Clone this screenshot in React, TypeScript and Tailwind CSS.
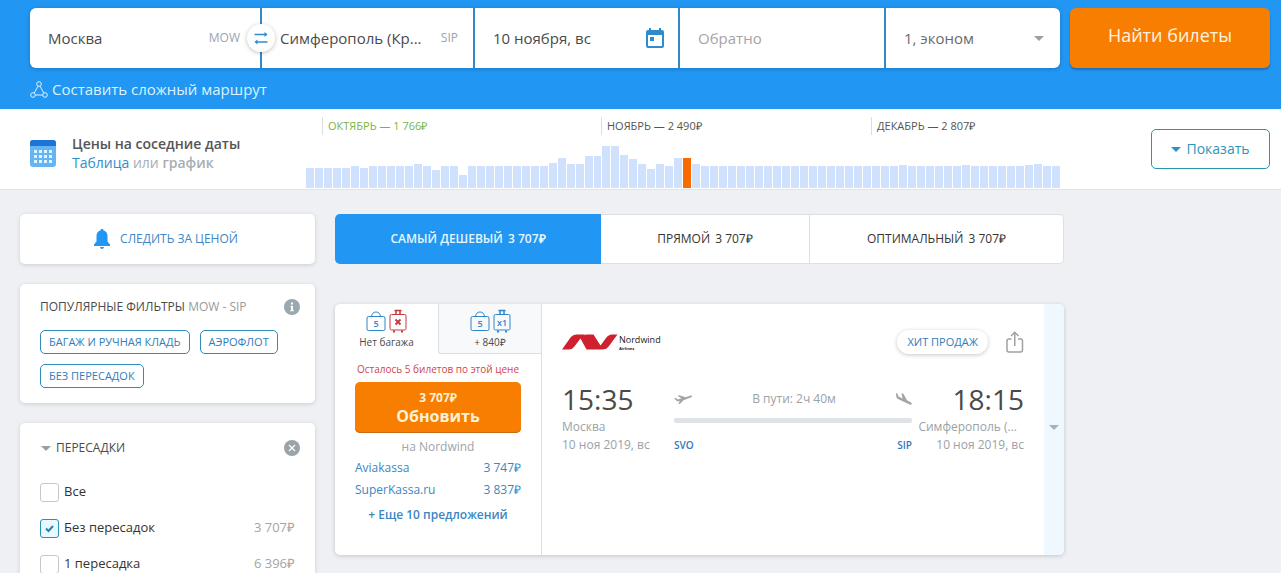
import React from 'react';
import clsx from 'clsx';

const PRICE_BARS = [
  20, 20, 20, 20, 20, 22, 20, 22, 22, 22, 22, 22, 24, 22, 18, 22, 22, 13, 22, 22, 22,
  22, 22, 22, 22, 22, 22, 25, 30, 24, 24, 32, 32, 42, 42, 33, 29, 24, 19, 24, 22, 30,
  30, 24, 22, 22, 22, 22, 22, 22, 22, 22, 22, 22, 22, 22, 22, 22, 22, 22, 22, 22, 22,
  22, 22, 22, 23, 22, 22, 22, 22, 22, 22, 23, 22, 22, 22, 22, 22, 22, 23, 24, 22, 22,
];
const SELECTED_BAR = 42;

const MONTHS = [
  { label: 'ОКТЯБРЬ — 1 766₽', cheapest: true },
  { label: 'НОЯБРЬ — 2 490₽', cheapest: false },
  { label: 'ДЕКАБРЬ — 2 807₽', cheapest: false },
];

const STOPS = [
  { id: 'all', label: 'Все', price: '', checked: false },
  { id: 'direct', label: 'Без пересадок', price: '3 707₽', checked: true },
  { id: 'one', label: '1 пересадка', price: '6 396₽', checked: false },
];

const QUICK_FILTERS = ['БАГАЖ И РУЧНАЯ КЛАДЬ', 'АЭРОФЛОТ', 'БЕЗ ПЕРЕСАДОК'];

const OFFERS = [
  { agency: 'Aviakassa', price: '3 747₽' },
  { agency: 'SuperKassa.ru', price: '3 837₽' },
];

const Caret: React.FC<{ className?: string }> = ({ className }) => (
  <svg viewBox="0 0 10 5" className={clsx('h-[5px] w-[10px] shrink-0 fill-current', className)} aria-hidden="true">
    <path d="M0 0h10L5 5z" />
  </svg>
);

const CabinBag = () => (
  <svg viewBox="0 0 20 22" className="h-[22px] w-5" fill="none" stroke="#2f86c9" aria-hidden="true">
    <rect x="1" y="5.5" width="18" height="14" rx="1.5" />
    <path d="M5.5 5.5C6 2.500 7.500 1 10 1s4 1.500 4.500 4.500" />
    <text x="10" y="16" textAnchor="middle" fontSize="9" fontWeight="600" fill="#2f86c9" stroke="none">5</text>
  </svg>
);

const Suitcase: React.FC<{ none?: boolean }> = ({ none }) => {
  const color = none ? '#c9343d' : '#2f86c9';
  return (
    <svg viewBox="0 0 18 24" className="h-6 w-[18px]" fill="none" stroke={color} aria-hidden="true">
      <rect x="1" y="5.500" width="16" height="15.500" rx="1.500" />
      <path d="M5.500 1.500h7M7 1.500v4M11 1.500v4" strokeWidth="1.500" />
      <path d="M4 22.500h2M12 22.500h2" strokeWidth="2" />
      {none ? (
        <path d="M6.500 10.500l5 5M11.500 10.500l-5 5" strokeWidth="1.800" />
      ) : (
        <text x="9" y="16.500" textAnchor="middle" fontSize="9" fontWeight="600" fill={color} stroke="none">x1</text>
      )}
    </svg>
  );
};

const SearchHeader = () => (
  <header className="bg-[#2196f3] pt-2 pr-[11px] pb-[9px] pl-[30px]">
    <form className="flex gap-[10px]" onSubmit={(e) => e.preventDefault()}>
      <div className="grid h-[60px] flex-1 grid-cols-[230fr_211fr_203fr_204fr_174fr] gap-0.5 rounded-md bg-[#3588c8] text-[15px] text-[#4a4a4a] shadow-[0_1px_4px_rgba(0,0,0,0.2)]">
        <label className="relative flex min-w-0 items-center rounded-l-md bg-white pr-5 pl-[18px]">
          <input aria-label="Откуда" defaultValue="Москва" className="w-0 flex-1 outline-none" />
          <span className="text-xs text-[#9aa5ab]">MOW</span>
          <button
            type="button"
            aria-label="Поменять местами"
            className="absolute top-4 -right-[15px] z-10 flex size-7 items-center justify-center rounded-full bg-white shadow-[0_1px_4px_rgba(0,0,0,0.25)]"
          >
            <svg viewBox="0 0 14 14" className="size-[14px]" fill="none" stroke="#2f8ccc" strokeWidth="1.5" aria-hidden="true">
              <path d="M0.500 3.500h12M1.500 11h12" />
              <path d="M10.500 1l3 2.500-3 2.500zM3.500 8.500l-3 2.500 3 2.500z" fill="#2f8ccc" stroke="none" />
            </svg>
          </button>
        </label>
        <label className="flex min-w-0 items-center bg-white pr-[15px] pl-[18px]">
          <input aria-label="Куда" defaultValue="Симферополь (Кр..." className="w-0 flex-1 outline-none" />
          <span className="text-xs text-[#9aa5ab]">SIP</span>
        </label>
        <label className="flex min-w-0 items-center bg-white pr-[14px] pl-[18px]">
          <input aria-label="Туда" defaultValue="10 ноября, вс" className="w-0 flex-1 outline-none" />
          <svg viewBox="0 0 18 20" className="h-5 w-[18px]" fill="#2f8ccc" aria-hidden="true">
            <path fillRule="evenodd" d="M3 0h2v2h8V0h2v2h1a2 2 0 0 1 2 2v14a2 2 0 0 1-2 2H2a2 2 0 0 1-2-2V4a2 2 0 0 1 2-2h1zM2 7v11h14V7z" />
            <path d="M4 9h4v4H4z" />
          </svg>
        </label>
        <label className="flex min-w-0 items-center bg-white px-[18px]">
          <input aria-label="Обратно" placeholder="Обратно" className="w-0 flex-1 outline-none placeholder:text-[#a5a5a5]" />
        </label>
        <label className="flex min-w-0 items-center rounded-r-md bg-white pr-4 pl-[18px]">
          <select aria-label="Пассажиры и класс" className="w-0 flex-1 appearance-none text-[#6b6b6b] outline-none">
            <option>1, эконом</option>
          </select>
          <Caret className="text-[#9e9e9e]" />
        </label>
      </div>
      <button type="submit" className="w-[200px] rounded-md bg-[#f77e00] pb-1.5 text-lg font-medium text-[#fff3e0] shadow-[0_2px_2px_rgba(0,0,0,0.25)]">
        Найти билеты
      </button>
    </form>
    <a href="#multi" className="mt-[11px] flex w-fit items-center gap-1 text-[15px] leading-[21px] font-medium text-[#dcf3ff]">
      <svg viewBox="0 0 18 17" className="h-[17px] w-[18px]" fill="none" stroke="currentColor" aria-hidden="true">
        <circle cx="9" cy="3" r="2.300" />
        <circle cx="3" cy="14" r="2.300" />
        <circle cx="15" cy="14" r="2.300" />
        <path d="M8 5.200L4.200 12M10 5.200l3.800 6.800M5.300 14h7.400" />
      </svg>
      Составить сложный маршрут
    </a>
  </header>
);

const PriceCalendar = () => (
  <section className="flex h-[81px] border-b border-[#dfe2e6] bg-white pr-[11px] pl-[30px]">
    <div className="flex w-[276px] items-center gap-4 pt-2">
      <svg viewBox="0 0 26 27" className="h-[27px] w-[26px]" aria-hidden="true">
        <rect width="26" height="27" rx="3" fill="#64b5f6" />
        <path d="M3 0h20a3 3 0 0 1 3 3v3H0V3a3 3 0 0 1 3-3z" fill="#1e74d2" />
        <g fill="#e3f6ff">
          {[10, 15, 20].map((y) => [4, 9, 14, 19].map((x) => <rect key={x + '-' + y} x={x} y={y} width="3" height="3" />))}
        </g>
      </svg>
      <div className="text-sm leading-[19px] font-medium">
        <div className="font-semibold text-[#555]">Цены на соседние даты</div>
        <div className="text-[#a8adb1]">
          <a href="#table" className="text-[#2f8fcb]">Таблица</a> <span className="font-normal">или</span> <span className="font-semibold">график</span>
        </div>
      </div>
    </div>
    <div className="flex min-w-0 flex-1 flex-col justify-between pt-2 pb-px">
      <div className="grid grid-cols-[16fr_279fr_270fr_189fr] text-[11px] leading-[18px]">
        <span />
        {MONTHS.map((month) => (
          <span key={month.label} className={clsx('border-l border-[#dcdfe2] pl-[5px] whitespace-nowrap', month.cheapest ? 'text-[#7cb342]' : 'text-[#555]')}>
            {month.label}
          </span>
        ))}
      </div>
      <div className="flex items-end gap-px">
        {PRICE_BARS.map((height, index) => (
          <div key={index} className={clsx('flex-1', index === SELECTED_BAR ? 'bg-[#f76b00]' : 'bg-[#cfe1fc]')} style={{ height }} />
        ))}
      </div>
    </div>
    <button type="button" className="mt-5 ml-[91px] flex h-10 w-[119px] items-center justify-center gap-[5px] rounded-[5px] border border-[#2a96ac] text-sm text-[#2a96ba]">
      <Caret className="text-[#2f8fcb]" />
      Показать
    </button>
  </section>
);

const Sidebar = () => (
  <aside className="flex w-[295px] shrink-0 flex-col gap-5">
    <button type="button" className="flex h-[50px] items-center justify-center gap-[9px] rounded-[5px] bg-white pr-1 text-xs font-medium text-[#3d86c9] shadow-[0_1px_4px_rgba(0,0,0,0.15)]">
      <svg viewBox="0 0 18 20" className="h-5 w-[18px]" fill="#2196f3" aria-hidden="true">
        <path d="M9 0c.9 0 1.500.6 1.600 1.400C13.200 2.100 14.500 4.300 14.500 7v5.500L17 15.500V17H1v-1.500l2.500-3V7c0-2.700 1.300-4.900 3.900-5.600C7.500.6 8.100 0 9 0zM7 18h4c-.2 1.200-1 2-2 2s-1.800-.8-2-2z" />
      </svg>
      СЛЕДИТЬ ЗА ЦЕНОЙ
    </button>

    <section className="rounded-[5px] bg-white px-5 pt-[14px] pb-[15px] shadow-[0_1px_4px_rgba(0,0,0,0.15)]">
      <div className="-mr-[5px] flex items-center justify-between">
        <h2 className="text-xs leading-[18px] font-medium text-[#4a4a4a]">
          ПОПУЛЯРНЫЕ ФИЛЬТРЫ <span className="text-[#999]">MOW - SIP</span>
        </h2>
        <svg viewBox="0 0 16 16" className="size-4" aria-hidden="true">
          <circle cx="8" cy="8" r="8" fill="#9aa8b0" />
          <path d="M7 3.500h2v2H7zM6.500 6.700H9v4.300h.8v1.300H6.300V11H7V8h-.5z" fill="#fff" />
        </svg>
      </div>
      <div className="mt-[14px] flex flex-wrap gap-[10px]">
        {QUICK_FILTERS.map((filter) => (
          <button key={filter} type="button" className="h-6 rounded-[5px] border border-[#2f8dba] px-2 text-[11px] font-medium text-[#2f7dba]">
            {filter}
          </button>
        ))}
      </div>
    </section>

    <section className="rounded-[5px] bg-white px-5 pt-4 pb-5 shadow-[0_1px_4px_rgba(0,0,0,0.15)]">
      <div className="-mr-[5px] flex items-center gap-[5px] pl-[1px]">
        <Caret className="text-[#9e9e9e]" />
        <h2 className="flex-1 text-xs leading-[18px] font-medium text-[#4a4a4a]">ПЕРЕСАДКИ</h2>
        <button type="button" aria-label="Сбросить">
          <svg viewBox="0 0 16 16" className="size-4" aria-hidden="true">
            <circle cx="8" cy="8" r="8" fill="#9aa5a9" />
            <path d="M5 5l6 6M11 5l-6 6" stroke="#fff" strokeWidth="1.300" />
          </svg>
        </button>
      </div>
      <div className="mt-[17px]">
        {STOPS.map((stop) => (
          <label key={stop.id} className="flex h-9 items-center gap-[5px] text-[13px] text-[#333]">
            <span className="relative flex size-[19px]">
              <input
                type="checkbox"
                defaultChecked={stop.checked}
                className="size-full appearance-none rounded-[3px] border border-[#c4c8cb] bg-white checked:border-[#2f8dba] checked:bg-[#e6fbff]"
              />
              {stop.checked && (
                <svg viewBox="0 0 19 19" className="pointer-events-none absolute inset-0" fill="none" stroke="#2f7fae" strokeWidth="2" aria-hidden="true">
                  <path d="M6 9.500l2.500 2.500L13 7" />
                </svg>
              )}
            </span>
            <span className="flex-1">{stop.label}</span>
            <span className="text-[#a5a5a5]">{stop.price}</span>
          </label>
        ))}
      </div>
    </section>
  </aside>
);

const SortTabs = () => (
  <div className="grid h-[50px] grid-cols-[266fr_209fr_254fr] text-xs font-medium text-[#333]">
    <button type="button" className="rounded-l-[5px] bg-[#2196f3] font-semibold text-[#e6f8ff]">
      САМЫЙ ДЕШЕВЫЙ <span className="ml-0.5">3 707₽</span>
    </button>
    <button type="button" className="border-y border-r border-[#dcdfe3] bg-white">
      ПРЯМОЙ <span className="ml-0.5">3 707₽</span>
    </button>
    <button type="button" className="rounded-r-[5px] border-y border-r border-[#dcdfe3] bg-white">
      ОПТИМАЛЬНЫЙ <span className="ml-0.5">3 707₽</span>
    </button>
  </div>
);

const TicketOffers = () => (
  <div className="w-[207px] shrink-0 border-r border-[#dcdfe3]">
    <div className="grid h-[50px] grid-cols-2 text-[10px] leading-3 text-[#4a4a4a]">
      <button type="button" className="flex flex-col items-center gap-[3px] pt-[5px]">
        <span className="flex items-end gap-[3px]"><CabinBag /><Suitcase none /></span>
        Нет багажа
      </button>
      <button type="button" className="flex flex-col items-center gap-[3px] rounded-bl-[3px] border-b border-l border-[#dcdfe3] bg-[#f7f9fb] pt-[5px]">
        <span className="flex items-end gap-[3px]"><CabinBag /><Suitcase /></span>
        + 840₽
      </button>
    </div>
    <div className="px-5 pt-[7px] text-center">
      <p className="-mx-2 text-[10px] leading-4 whitespace-nowrap text-[#d0454c]">Осталось 5 билетов по этой цене</p>
      <button type="button" className="mt-[5px] flex h-[51px] w-full flex-col items-center justify-center rounded-[5px] bg-[#f77e00] font-bold text-[#fff1d6] shadow-[inset_0_-1px_0_#c96a14]">
        <span className="text-xs leading-4">3 707₽</span>
        <span className="text-base leading-5">Обновить</span>
      </button>
      <p className="mt-[5px] text-xs leading-[18px] text-[#a0a5a8]">на Nordwind</p>
      <ul className="mt-px text-xs leading-[22px] text-[#3d86c0]">
        {OFFERS.map((offer) => (
          <li key={offer.agency}>
            <a href="#offer" className="flex justify-between">
              <span>{offer.agency}</span>
              <span className="font-medium">{offer.price}</span>
            </a>
          </li>
        ))}
      </ul>
      <a href="#more" className="mt-[3px] block text-xs leading-[22px] font-semibold text-[#3d86c0]">+ Еще 10 предложений</a>
    </div>
  </div>
);

const NordwindLogo = () => (
  <div className="flex items-center gap-px text-[#222]">
    <svg viewBox="0 0 56 16" className="h-4 w-14" fill="#cf2030" aria-hidden="true">
      <path d="M0 15.500L8.500 3.500Q11 .5 15 .5H22Q24.500 .5 26 3L33 15.500H24.500L18.500 4.500L12 13Q10 15.500 7 15.500z" />
      <path d="M23.500 .5H31.500L38.500 11.500L44 4Q46.500 .5 50 .5H55.500L47 12Q44.500 15.500 40.500 15.500H33.500Q31.500 15.500 30 13z" />
    </svg>
    <div className="text-[9px] leading-3 font-medium">
      Nordwind
      <div className="text-[4px] leading-[5px] font-bold">Airlines</div>
    </div>
  </div>
);

const TicketCard = () => (
  <article className="mt-10 flex min-h-[251px] overflow-hidden rounded-[5px] bg-white shadow-[0_1px_4px_rgba(0,0,0,0.18)]">
    <TicketOffers />
    <div className="min-w-0 flex-1 px-5 pt-6">
      <div className="flex h-7 items-center">
        <NordwindLogo />
        <span className="ml-auto rounded-full px-[10px] text-[11px] leading-6 font-medium text-[#2f7dba] shadow-[0_1px_4px_rgba(0,0,0,0.22)]">ХИТ ПРОДАЖ</span>
        <button type="button" aria-label="Поделиться" className="ml-[18px]">
          <svg viewBox="0 0 18 22" className="h-[22px] w-[18px]" fill="none" stroke="#9ea2a5" strokeWidth="1.500" aria-hidden="true">
            <path d="M5.500 8H3a2 2 0 0 0-2 2v9a2 2 0 0 0 2 2h11.500a2 2 0 0 0 2-2v-9a2 2 0 0 0-2-2H12M8.750 15V1.500M5 5l3.750-3.750L12.500 5" />
          </svg>
        </button>
      </div>
      <div className="mt-6 flex text-xs leading-[18px] text-[#9aa2a6]">
        <div className="w-28 shrink-0">
          <div className="text-[28px] leading-[38px] text-[#4a4a4a]">15:35</div>
          <div>Москва</div>
          <div>10 ноя 2019, вс</div>
        </div>
        <div className="min-w-0 flex-1">
          <div className="flex h-[38px] items-center justify-between">
            <svg viewBox="0 0 18 9" className="h-[9px] w-[18px]" fill="#a0a5a8" aria-hidden="true">
              <path d="M0 3.500L1.500 3l2.500 1.500L7.500 3.300 3.500.8 5.500.2l6 2L16 .7c1-.3 2 0 2 .6 0 .6-.6.9-1.400 1.200L9.500 5.300 6 8.800l-1.800.2 1.600-3L3.500 6.500z" />
            </svg>
            <span>В пути: 2ч 40м</span>
            <svg viewBox="0 0 16 13" className="h-[13px] w-4" fill="#a0a5a8" aria-hidden="true">
              <path d="M0 0l1.500.8L2.500 3.500l4 2L5.500 0l2 1 3.500 6.300 3.500 1.900c.9.500 1.500 1.200 1.300 1.900-.2.800-1.200.9-2.200.4L2.500 6.300C1 5.500.3 4.500.2 3z" />
            </svg>
          </div>
          <div className="h-[5px] rounded-[2px] bg-[#dfe2e6]" />
          <div className="mt-[13px] flex justify-between text-[10px] leading-[18px] font-semibold text-[#3179bb]">
            <span>SVO</span>
            <span>SIP</span>
          </div>
        </div>
        <div className="w-28 shrink-0 text-right">
          <div className="text-[28px] leading-[38px] text-[#4a4a4a]">18:15</div>
          <div className="pr-[7px] whitespace-nowrap">Симферополь (...</div>
          <div>10 ноя 2019, вс</div>
        </div>
      </div>
    </div>
    <button type="button" aria-label="Подробнее" className="flex w-5 shrink-0 items-center justify-center bg-[#eff8ff] pb-1">
      <Caret className="text-[#a5b1bc]" />
    </button>
  </article>
);

export default function App() {
  return (
    <div className="h-screen overflow-hidden bg-[#eef0f4] font-['Open_Sans',sans-serif]">
      <SearchHeader />
      <PriceCalendar />
      <div className="flex gap-5 px-5 pt-6">
        <Sidebar />
        <main className="max-w-[729px] min-w-0 flex-1">
          <SortTabs />
          <TicketCard />
        </main>
      </div>
    </div>
  );
}
